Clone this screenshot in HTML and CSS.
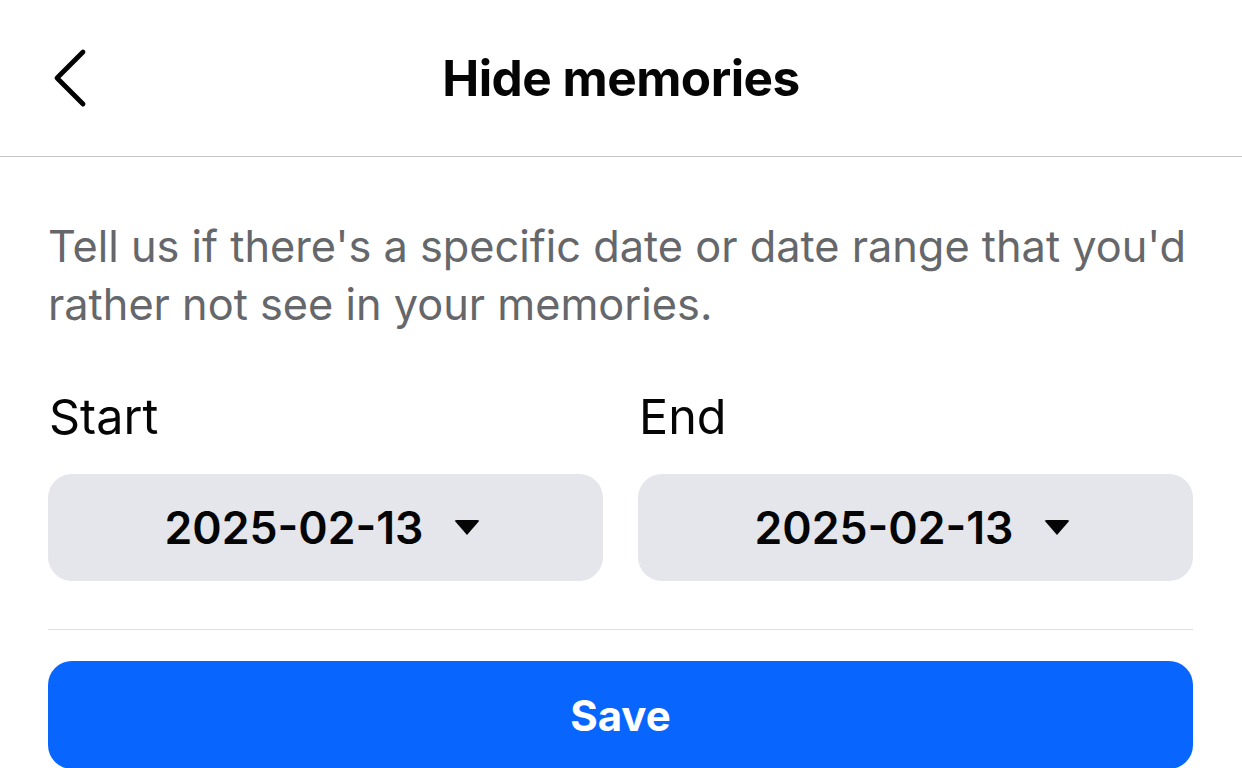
FILE: index.html
```html
<!DOCTYPE html>
<html>
<head>
  <meta charset="UTF-8">
  <title>Hide memories</title>
  <link rel="stylesheet" href="styles.css">
</head>
<body>
  <div class="header">
    <button class="back" aria-label="Back">
      <svg width="44" height="68" viewBox="0 0 44 68">
        <path d="M35 8 L9 34 L35 60" fill="none" stroke="#000" stroke-width="4.8" stroke-linecap="round" stroke-linejoin="round"/>
      </svg>
    </button>
    <h1 class="title">Hide memories</h1>
  </div>

  <div class="content">
    <p class="intro">Tell us if there's a specific date or date range that you'd rather not see in your memories.</p>

    <div class="range">
      <div class="field">
        <div class="field-label">Start</div>
        <div class="picker">
          <span class="date">2025-02-13</span>
          <span class="caret"></span>
        </div>
      </div>
      <div class="field">
        <div class="field-label">End</div>
        <div class="picker">
          <span class="date">2025-02-13</span>
          <span class="caret"></span>
        </div>
      </div>
    </div>

    <div class="divider"></div>

    <button class="save">Save</button>
  </div>
</body>
</html>
```

FILE: styles.css
```css
body {
  margin: 0;
  background: #fff;
  font-family: Inter, "Noto Sans", Arial, sans-serif;
  color: #050505;
  overflow: hidden;
}
.header {
  position: relative;
  height: 156px;
  border-bottom: 1px solid #c4c4c4;
  display: flex;
  align-items: center;
  justify-content: center;
}
.back {
  position: absolute;
  left: 48px;
  top: 44px;
  padding: 0;
  border: none;
  background: none;
}
.back svg {
  display: block;
}
.title {
  margin: 0;
  font-size: 49.5px;
  font-weight: 700;
  letter-spacing: -0.5px;
}
.content {
  padding: 0 49px 0 48px;
}
.intro {
  margin: 0;
  padding-top: 60px;
  font-size: 43.3px;
  line-height: 58px;
  color: #65676b;
}
.range {
  display: flex;
  gap: 35px;
  margin-top: 56px;
}
.field {
  flex: 1;
}
.field-label {
  font-size: 48.5px;
  line-height: 56px;
  padding-left: 1px;
  margin-bottom: 29px;
}
.picker {
  height: 107px;
  border-radius: 24px;
  background: #e4e6eb;
  display: flex;
  align-items: center;
  justify-content: center;
  gap: 31px;
  padding-right: 6px;
}
.date {
  font-size: 44.6px;
  font-weight: 600;
}
.caret {
  width: 0;
  height: 0;
  border-left: 13px solid transparent;
  border-right: 13px solid transparent;
  border-top: 15px solid #050505;
  border-radius: 3px;
}
.divider {
  height: 1px;
  background: #dddfe2;
  margin-top: 48px;
}
.save {
  display: block;
  width: 100%;
  height: 108px;
  margin-top: 31px;
  border: none;
  border-radius: 24px;
  background: #0866ff;
  color: #fff;
  font-family: inherit;
  font-size: 42px;
  font-weight: 700;
}
```
